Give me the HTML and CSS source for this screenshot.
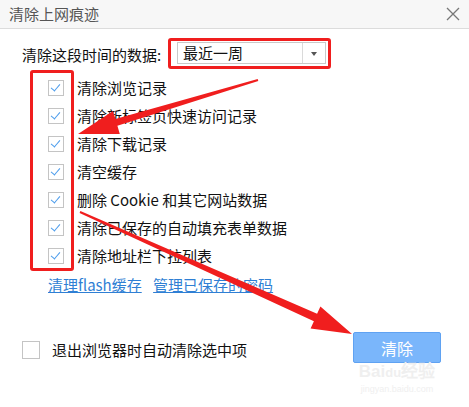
FILE: index.html
```html
<!DOCTYPE html>
<html lang="zh-CN">
<head>
<meta charset="UTF-8">
<meta name="viewport" content="width=device-width, initial-scale=1.0">
<title>清除上网痕迹</title>
<link rel="stylesheet" href="styles.css">
</head>
<body>

<div class="dialog">
    <div class="titlebar">
        <span class="title">清除上网痕迹</span>
        <svg class="close" width="14" height="14" viewBox="0 0 14 14">
            <path d="M1 1 L13 13 M13 1 L1 13" stroke="#777" stroke-width="1.3" fill="none"/>
        </svg>
    </div>

    <div class="content">
        <div class="range-row">
            <span class="range-label">清除这段时间的数据:</span>
            <div class="select">
                <span class="select-value">最近一周</span>
                <span class="select-arrow"></span>
            </div>
        </div>

        <ul class="options">
            <li><span class="check on"></span>清除浏览记录</li>
            <li><span class="check on"></span>清除新标签页快速访问记录</li>
            <li><span class="check on"></span>清除下载记录</li>
            <li><span class="check on"></span>清空缓存</li>
            <li><span class="check on"></span>删除 Cookie 和其它网站数据</li>
            <li><span class="check on"></span>清除已保存的自动填充表单数据</li>
            <li><span class="check on"></span>清除地址栏下拉列表</li>
        </ul>

        <div class="links">
            <a href="#">清理flash缓存</a>
            <a href="#">管理已保存的密码</a>
        </div>

        <div class="footer">
            <label class="auto-clear"><span class="check big"></span>退出浏览器时自动清除选中项</label>
            <button class="clear-btn">清除</button>
        </div>
    </div>

    <!-- 标注: 红框和箭头 -->
    <div class="mark mark-select"></div>
    <div class="mark mark-checks"></div>
    <svg class="arrows" width="469" height="407" viewBox="0 0 469 407">
        <polygon fill="#f01e1e" points="258.3,81 117.4,125.8 119.8,134 78,134 113,111 115.4,119.1 257.7,79"/>
        <polygon fill="#f01e1e" points="79.6,212.9 313.9,321.2 310.6,328.5 352,334 320.4,306.5 317.1,313.8 80.4,211.1"/>
    </svg>

    <div class="watermark">
        <span class="wm-logo">Bai<span class="wm-du">du</span>经验</span>
        <span class="wm-url">jingyan.baidu.com</span>
    </div>
</div>

</body>
</html>
```

FILE: styles.css
```css
/* Página */
body {
    margin: 0;
    background-color: #ffffff;
    font-family: "Noto Sans CJK SC", "Microsoft YaHei", sans-serif;
    font-size: 15px;
    color: #111111;
}

.dialog {
    position: relative;
    width: 469px;
    height: 407px;
    overflow: hidden;
}

/* Barra de título */
.titlebar {
    height: 29px;
    background-color: #f7f7f7;
    border-bottom: 1px solid #dcdcdc;
    display: flex;
    align-items: center;
    justify-content: space-between;
    padding: 0 9px;
    box-sizing: border-box;
}

.title {
    color: #555555;
    line-height: 20px;
}

.content {
    padding-left: 22px;
    padding-right: 28px;
}

/* Linha do período */
.range-row {
    margin-top: 13px;
    height: 22px;
    display: flex;
    align-items: center;
}

.range-label {
    line-height: 20px;
    width: 155px;
    margin-top: 3px;
}

.select {
    width: 149px;
    height: 22px;
    border: 1px solid #c9c9c9;
    box-sizing: border-box;
    display: flex;
    background-color: #ffffff;
}

.select-value {
    flex: 1;
    padding-left: 5px;
    line-height: 20px;
}

.select-arrow {
    width: 22px;
    border-left: 1px solid #dadada;
    position: relative;
}

.select-arrow::after {
    content: "";
    position: absolute;
    left: 8px;
    top: 9px;
    border-left: 3px solid transparent;
    border-right: 3px solid transparent;
    border-top: 4px solid #555555;
}

/* Lista de opções */
.options {
    list-style: none;
    margin: 10px 0 0 0;
    padding: 0;
}

.options li {
    height: 28px;
    display: flex;
    align-items: center;
    line-height: 20px;
    padding-left: 26px;
}

.check {
    width: 16px;
    height: 16px;
    border: 1px solid #c4c4c4;
    box-sizing: border-box;
    margin-right: 13px;
    position: relative;
    flex-shrink: 0;
}

.check.on::after {
    content: "";
    position: absolute;
    left: 4px;
    top: 1px;
    width: 4px;
    height: 8px;
    border-right: 1px solid #4c9cec;
    border-bottom: 1px solid #4c9cec;
    transform: rotate(40deg);
}

.check.big {
    width: 18px;
    height: 18px;
    margin-right: 12px;
}

/* Links */
.links {
    margin-top: 5px;
    padding-left: 26px;
    height: 20px;
    line-height: 20px;
}

.links a {
    color: #2f7fd4;
    margin-right: 8px;
}

/* Rodapé */
.footer {
    margin-top: 37px;
    display: flex;
    align-items: center;
    justify-content: space-between;
}

.auto-clear {
    display: flex;
    align-items: center;
    line-height: 20px;
    margin-top: 4px;
}

.clear-btn {
    width: 88px;
    height: 31px;
    border: 1px solid #5fa2f2;
    border-radius: 2px;
    background-color: #7ab6fb;
    color: #ffffff;
    font-family: inherit;
    font-size: 16px;
    padding: 0;
}

/* Marcações vermelhas */
.mark {
    position: absolute;
    border: 3px solid #f01e1e;
    border-radius: 3px;
    box-sizing: border-box;
}

.mark-select {
    left: 168px;
    top: 38px;
    width: 163px;
    height: 31px;
}

.mark-checks {
    left: 30px;
    top: 70px;
    width: 44px;
    height: 201px;
}

.arrows {
    position: absolute;
    left: 0;
    top: 0;
    pointer-events: none;
}

/* Marca d'água */
.watermark {
    position: absolute;
    left: 352px;
    top: 362px;
    width: 90px;
    text-align: center;
    color: #efefef;
    font-family: "Liberation Sans", sans-serif;
}

.wm-logo {
    display: block;
    font-size: 17px;
    font-weight: bold;
    line-height: 20px;
}

.wm-du {
    font-size: 13px;
}

.wm-url {
    display: block;
    font-size: 9px;
    line-height: 12px;
}
```
